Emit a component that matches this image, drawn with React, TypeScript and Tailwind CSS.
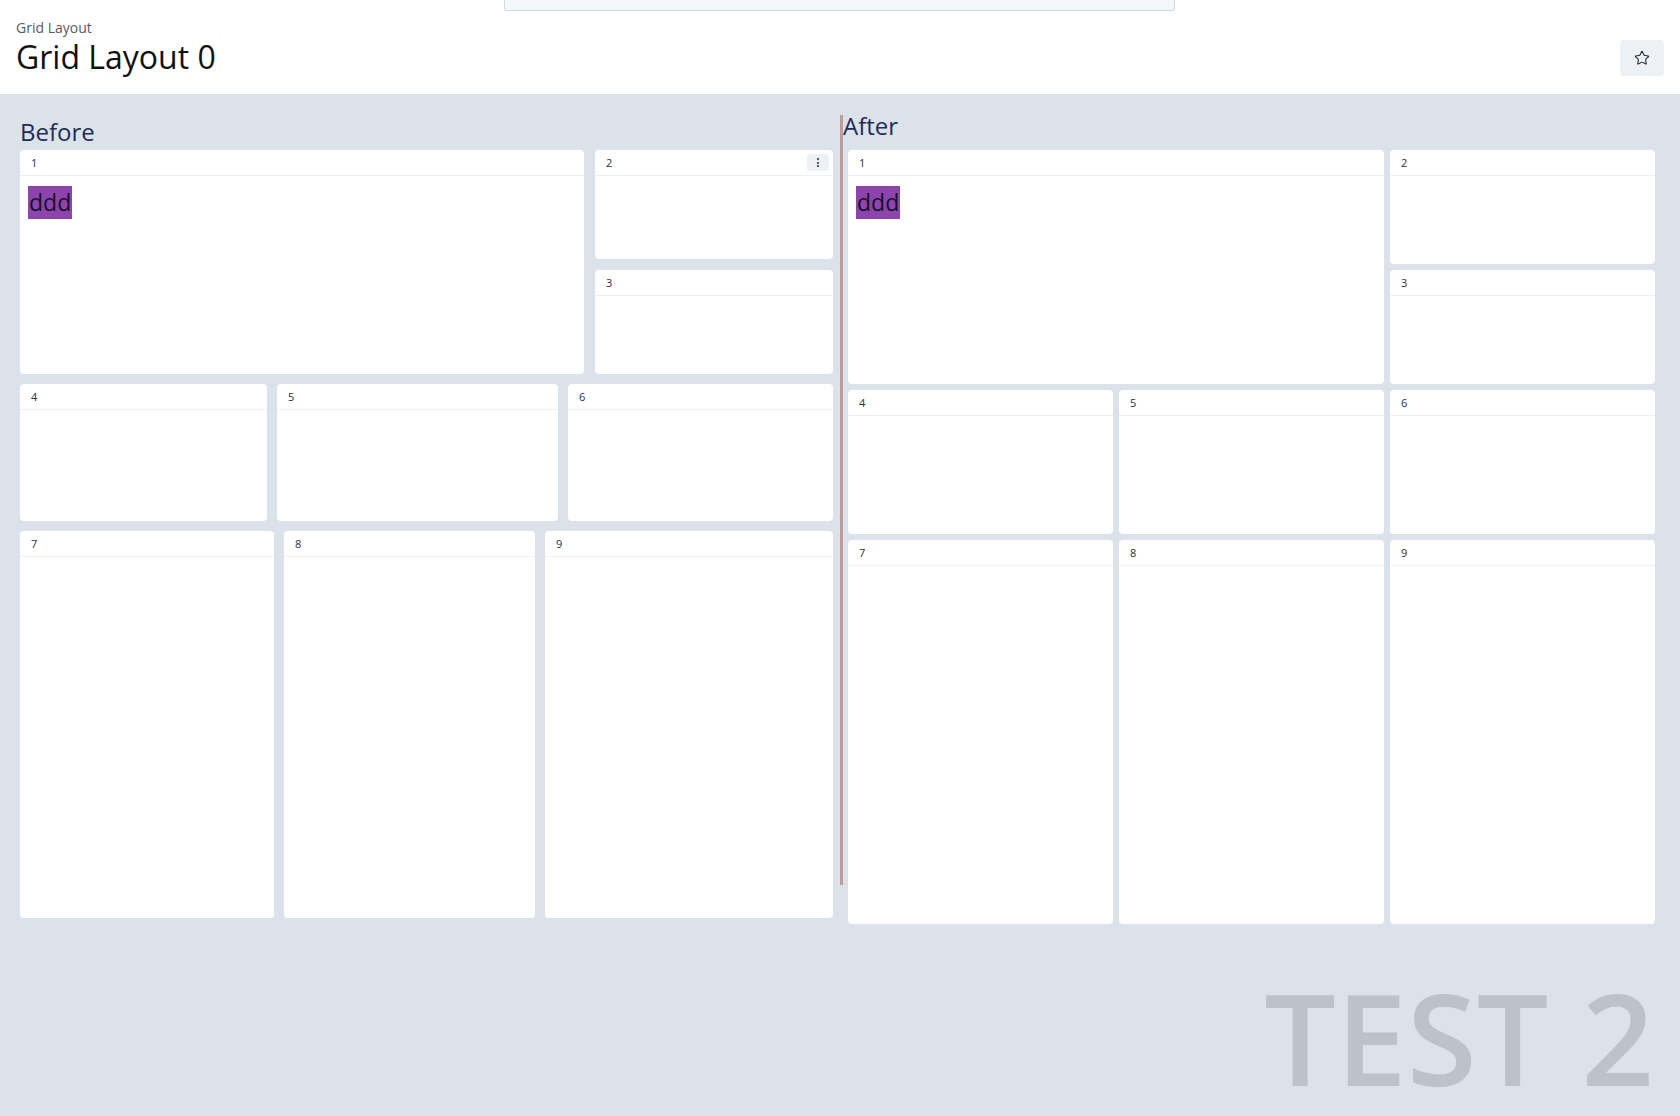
import React from "react";
import { Star } from "lucide-react";

type CardProps = { n: string; h: number; ddd?: boolean; menu?: boolean; className?: string };

function Card({ n, h, ddd, menu, className }: CardProps) {
  return (
    <div className={"bg-white rounded-[4px] flex flex-col " + (className ?? "")} style={{ height: h }}>
      <div className="h-[26px] border-b border-[#eff1f4] flex items-center justify-between pl-[11px] pr-[4px] shrink-0">
        <span className="text-[11px] text-[#2a2f3a] leading-none">{n}</span>
        {menu && (
          <div className="w-[22px] h-[17px] rounded-[3px] bg-[#edf0f4] flex flex-col items-center justify-center gap-[1.5px]">
            <span className="w-[2px] h-[2px] bg-[#1f2937] rounded-full" />
            <span className="w-[2px] h-[2px] bg-[#1f2937] rounded-full" />
            <span className="w-[2px] h-[2px] bg-[#1f2937] rounded-full" />
          </div>
        )}
      </div>
      {ddd && (
        <div className="pl-[8px] pt-[10px]">
          <span className="inline-block bg-[#8e44ad] text-[#14112a] text-[23px] leading-[33px] px-[1px]">ddd</span>
        </div>
      )}
    </div>
  );
}

export default function App() {
  return (
    <div className="relative min-h-screen bg-[#dce2ea] font-['Open_Sans',sans-serif] overflow-hidden">
      <div className="absolute left-[504px] top-0 w-[671px] h-[11px] bg-[#f5f8fb] border border-t-0 border-[#d3d9e0] rounded-b-[3px]" />
      <header className="h-[94px] bg-white flex items-start justify-between pl-[16px] pr-[16px]">
        <div className="pt-[18px]">
          <div className="text-[14px] leading-[20px] text-[#555b66]">Grid Layout</div>
          <div className="text-[32px] leading-[38px] text-[#111]">Grid Layout 0</div>
        </div>
        <button className="mt-[40px] w-[44px] h-[36px] rounded-[4px] bg-[#edf0f4] flex items-center justify-center">
          <Star size={16} strokeWidth={1.6} className="text-[#1f2937]" />
        </button>
      </header>
      <main className="flex items-start pt-[14px] pl-[20px]">
        <section className="w-[813px] pt-[6px]">
          <div className="text-[24px] leading-[36px] text-[#1f2d55]">Before</div>
          <div className="flex flex-col gap-[10px]">
            <div className="grid grid-cols-[564px_1fr] gap-[11px]">
              <Card n="1" h={224} ddd />
              <div className="flex flex-col gap-[11px]">
                <Card n="2" h={109} menu />
                <Card n="3" h={104} />
              </div>
            </div>
            <div className="grid grid-cols-[247px_281px_1fr] gap-[10px]">
              <Card n="4" h={137} />
              <Card n="5" h={137} />
              <Card n="6" h={137} />
            </div>
            <div className="grid grid-cols-[254px_251px_1fr] gap-[10px]">
              <Card n="7" h={387} />
              <Card n="8" h={387} />
              <Card n="9" h={387} />
            </div>
          </div>
        </section>
        <div className="ml-[7px] mt-[7px] w-[3px] h-[770px] bg-[#bd9c9c]" />
        <section className="ml-[5px] w-[807px]">
          <div className="text-[24px] leading-[36px] text-[#1f2d55] mb-[6px] -ml-[5px]">After</div>
          <div className="grid grid-cols-3 gap-[6px]">
            <Card n="1" h={234} ddd className="col-span-2" />
            <div className="flex flex-col gap-[6px]">
              <Card n="2" h={114} />
              <Card n="3" h={114} />
            </div>
            <Card n="4" h={144} />
            <Card n="5" h={144} />
            <Card n="6" h={144} />
            <Card n="7" h={384} />
            <Card n="8" h={384} />
            <Card n="9" h={384} />
          </div>
        </section>
      </main>
      <div className="absolute right-[26px] top-[962px] text-[127px] leading-[150px] font-semibold text-[#bcc1ca] whitespace-nowrap">
        TEST 2
      </div>
    </div>
  );
}
